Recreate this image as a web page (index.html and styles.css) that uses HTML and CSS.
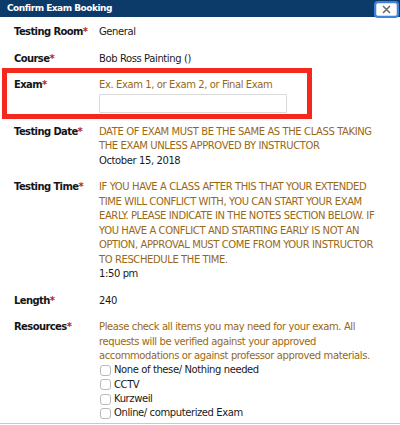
FILE: index.html
```html
<!DOCTYPE html>
<html>
<head>
<meta charset="utf-8">
<link rel="stylesheet" href="styles.css">
</head>
<body>
<div class="dialog">
  <div class="titlebar">
    <span class="title">Confirm Exam Booking</span>
    <button class="close" aria-label="Close">
      <svg width="9" height="9" viewBox="0 0 9 9"><path d="M1.5 1.5 L7.5 7.5 M7.5 1.5 L1.5 7.5" stroke="#6f6f6f" stroke-width="1.7" stroke-linecap="round"/></svg>
    </button>
  </div>
  <div class="content">
    <div class="row">
      <div class="label">Testing Room<span class="req">*</span></div>
      <div class="value">General</div>
    </div>
    <div class="row">
      <div class="label">Course<span class="req">*</span></div>
      <div class="value">Bob Ross Painting ()</div>
    </div>
    <div class="row highlight">
      <div class="label">Exam<span class="req">*</span></div>
      <div class="value">
        <div class="hint">Ex. Exam 1, or Exam 2, or Final Exam</div>
        <input class="textbox" type="text">
      </div>
    </div>
    <div class="row">
      <div class="label">Testing Date<span class="req">*</span></div>
      <div class="value">
        <div class="hint">DATE OF EXAM MUST BE THE SAME AS THE CLASS TAKING THE EXAM UNLESS APPROVED BY INSTRUCTOR</div>
        <div>October 15, 2018</div>
      </div>
    </div>
    <div class="row">
      <div class="label">Testing Time<span class="req">*</span></div>
      <div class="value">
        <div class="hint">IF YOU HAVE A CLASS AFTER THIS THAT YOUR EXTENDED TIME WILL CONFLICT WITH, YOU CAN START YOUR EXAM EARLY. PLEASE INDICATE IN THE NOTES SECTION BELOW. IF YOU HAVE A CONFLICT AND STARTING EARLY IS NOT AN OPTION, APPROVAL MUST COME FROM YOUR INSTRUCTOR TO RESCHEDULE THE TIME.</div>
        <div>1:50 pm</div>
      </div>
    </div>
    <div class="row">
      <div class="label">Length<span class="req">*</span></div>
      <div class="value">240</div>
    </div>
    <div class="row">
      <div class="label">Resources<span class="req">*</span></div>
      <div class="value">
        <div class="hint">Please check all items you may need for your exam. All requests will be verified against your approved accommodations or against professor approved materials.</div>
        <label class="check"><span class="box"></span>None of these/ Nothing needed</label>
        <label class="check"><span class="box"></span>CCTV</label>
        <label class="check"><span class="box"></span>Kurzweil</label>
        <label class="check"><span class="box"></span>Online/ computerized Exam</label>
      </div>
    </div>
  </div>
</div>
</body>
</html>
```
FILE: styles.css
```css
html, body {
  margin: 0;
  padding: 0;
  background: #ffffff;
}
body {
  font-family: "DejaVu Sans", "Open Sans", sans-serif;
  font-size: 10px;
  letter-spacing: -0.4px;
  line-height: 14.5px;
  color: #1a1a1a;
  width: 400px;
  height: 425px;
  overflow: hidden;
}
.dialog {
  height: 423px;
  border-bottom: 1px solid #c9c9c9;
  overflow: hidden;
}
.titlebar {
  height: 17px;
  background: #0c3b6a;
  display: flex;
  align-items: center;
  justify-content: space-between;
  padding-left: 7px;
}
.title {
  color: #ffffff;
  font-weight: bold;
  font-size: 9px;
  letter-spacing: -0.5px;
}
.close {
  width: 21px;
  height: 13px;
  margin-right: 3px;
  margin-top: 1px;
  padding: 0;
  background: #ffffff;
  border: 1px solid #d3dbe6;
  border-radius: 2px;
  box-shadow: 0 0 0 2px #3c84dc;
  display: flex;
  align-items: center;
  justify-content: center;
}
.content {
  padding: 8px 0 0 14px;
}
.row {
  display: flex;
  margin-bottom: 12px;
  position: relative;
}
.label {
  width: 85px;
  flex: none;
  font-weight: bold;
  letter-spacing: -0.6px;
  color: #151515;
}
.req {
  color: #b4262a;
}
.value {
  flex: 1;
  padding-right: 18px;
}
.hint {
  color: #996815;
}
.textbox {
  display: block;
  box-sizing: border-box;
  width: 188px;
  height: 19px;
  margin-top: 1px;
  border: 1px solid #d9d9d9;
  border-radius: 1px;
  background: #ffffff;
  padding: 0;
}
.highlight::before {
  content: "";
  position: absolute;
  left: -12px;
  top: -10px;
  width: 300px;
  height: 41px;
  border: 5px solid #f5281e;
}
.check {
  display: flex;
  align-items: center;
  height: 14.3px;
}
.box {
  width: 11px;
  height: 11px;
  box-sizing: border-box;
  border: 1px solid #b9b9b9;
  border-radius: 3px;
  margin: 0 3px 0 1px;
  background: #fff;
}
```
